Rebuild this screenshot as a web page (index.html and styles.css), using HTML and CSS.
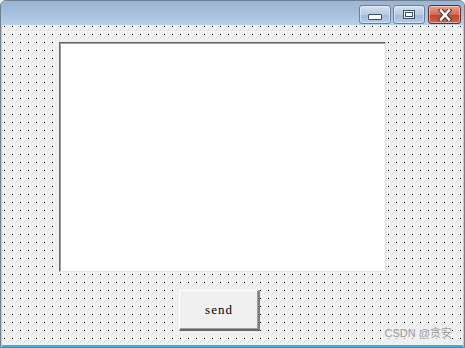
FILE: index.html
```html
<!DOCTYPE html>
<html lang="en">
<head>
    <meta charset="UTF-8">
    <title>Form</title>
    <link rel="stylesheet" href="styles.css">
</head>
<body>
    <div class="window">
        <div class="titlebar">
            <div class="caption-btn min-btn"><span class="min-glyph"></span></div>
            <div class="caption-btn max-btn"><span class="max-glyph"></span></div>
            <div class="caption-btn close-btn">
                <svg width="18" height="12" viewBox="0 0 18 12">
                    <path d="M5 1.5 L13 10.5 M13 1.5 L5 10.5" stroke="#4a2a26" stroke-width="4.6" stroke-linecap="square"/>
                    <path d="M5 1.5 L13 10.5 M13 1.5 L5 10.5" stroke="#ffffff" stroke-width="2.6" stroke-linecap="square"/>
                </svg>
            </div>
        </div>
        <div class="client">
            <div class="text-box"></div>
            <button class="send-btn"><span class="send-label">send</span></button>
            <span class="watermark">CSDN @贪安</span>
        </div>
    </div>
</body>
</html>
```

FILE: styles.css
```css
body {
    margin: 0;
    background: #f0f0f0;
    font-family: "Liberation Sans", Arial, sans-serif;
}
.window {
    width: 465px;
    height: 348px;
    box-sizing: border-box;
    border: 1px solid #6f7f94;
    border-top-left-radius: 6px;
    border-top-right-radius: 6px;
    background: #b4c9e2;
    display: flex;
    flex-direction: column;
    overflow: hidden;
}
.titlebar {
    height: 24px;
    flex: none;
    background: linear-gradient(#9ab4d2, #a6bfdc 50%, #b9d0ea);
    display: flex;
    justify-content: flex-end;
    align-items: flex-start;
    padding: 4px 3px 0 0;
    box-sizing: border-box;
    gap: 2px;
}
.caption-btn {
    height: 19px;
    box-sizing: border-box;
    border: 1px solid #6b7f9c;
    border-radius: 3px;
    display: flex;
    align-items: center;
    justify-content: center;
    background: linear-gradient(#d3e0ef, #b7cbe3 50%, #a3bad8 51%, #b4cbe6);
    box-shadow: inset 0 0 0 1px rgba(255, 255, 255, 0.45);
}
.min-btn { width: 32px; }
.max-btn { width: 32px; margin-right: 1px; }
.close-btn {
    width: 33px;
    border-color: #6d2a24;
    background: linear-gradient(#e7a08f, #d36c55 50%, #c0412b 51%, #cc6a4f);
}
.min-glyph {
    width: 12px;
    height: 4px;
    margin-top: 5px;
    background: #fff;
    border: 1px solid #3c4d63;
    border-radius: 1px;
}
.max-glyph {
    width: 10px;
    height: 7px;
    border: 1px solid #3c4d63;
    background: #fff;
    box-shadow: inset 0 0 0 1px #eef3f9, inset 0 0 0 2px #3c4d63;
    box-sizing: content-box;
}
.client {
    flex: 1;
    position: relative;
    margin: 0 1px;
    border-bottom: 2px solid #2fb6e0;
    background-color: #f0f0f0;
    background-image: conic-gradient(at 1px 1px, #f0f0f0 75%, #000 0);
    background-size: 8px 8px;
    background-position: 2px 1px;
    display: flex;
    flex-direction: column;
    align-items: flex-start;
}
.text-box {
    margin: 17px 0 0 57px;
    width: 327px;
    height: 230px;
    box-sizing: border-box;
    background: #fff;
    border-top: 1px solid #646464;
    border-left: 1px solid #646464;
    border-right: 1px solid #e3e3e3;
    border-bottom: 1px solid #e3e3e3;
    box-shadow: inset 1px 1px 0 #a0a0a0;
}
.send-btn {
    margin: 18px 0 0 177px;
    width: 81px;
    height: 41px;
    box-sizing: border-box;
    background: #f0f0f0;
    border-top: 1px solid #fff;
    border-left: 1px solid #fff;
    border-right: 2px solid #808080;
    border-bottom: 2px solid #696969;
    box-shadow: inset -1px -1px 0 #a0a0a0;
    color: #000;
    padding: 0;
}
.send-label {
    font-family: "Liberation Serif", "DejaVu Serif", serif;
    font-size: 13px;
    letter-spacing: 1px;
}
.watermark {
    position: absolute;
    right: 11px;
    bottom: 5px;
    font-family: "Liberation Sans", "Noto Sans CJK SC", sans-serif;
    font-size: 11px;
    color: #9a9a9a;
    background: rgba(240, 240, 240, 0.6);
}
```
